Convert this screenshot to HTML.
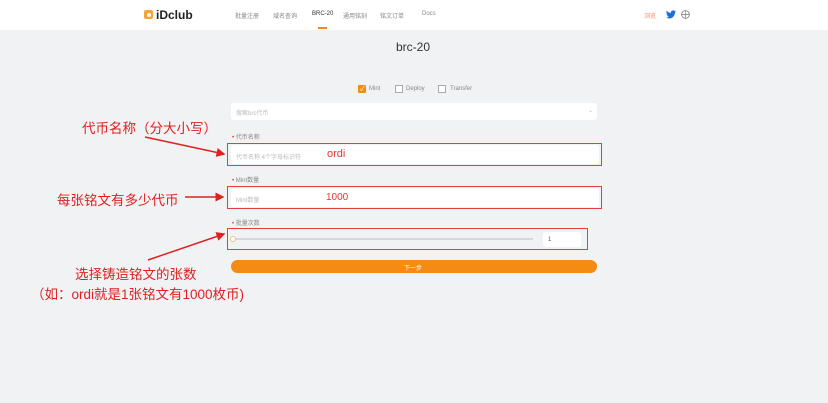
<!DOCTYPE html>
<html style="background:#f1f2f4"><head><meta charset="utf-8"><style>
*{margin:0;padding:0;box-sizing:border-box}
html,body{width:828px;height:403px;background:#f1f2f4}
body{font-family:"Liberation Sans","Noto Sans CJK SC",sans-serif;position:relative;overflow:hidden}
.bg{position:fixed;left:0;top:0;width:100%;height:100%;min-height:420px;background:#f1f2f4}
.hd{position:absolute;left:0;top:0;width:828px;height:30px;background:#fff}
.a{position:absolute;white-space:nowrap}
.nav{font-size:6px;color:#888;top:11px}
.in{position:absolute;background:#fff;border-radius:3px}
.lbl{font-size:6px;color:#888}
.box{position:absolute;border:1.5px solid #e53c3c}
.ann{font-size:13.5px;color:#e02020}
</style></head><body>
<div class="bg"></div>
<div class="hd"></div>
<div class="a" style="left:144px;top:10px;width:9px;height:9px;background:#f7a23a;border-radius:2px"></div>
<div class="a" style="left:147px;top:13px;width:4px;height:4px;background:#fff;border-radius:50%"></div>
<div class="a" style="left:156px;top:8px;font-size:12px;font-weight:bold;color:#222">iDclub</div>
<div class="a nav" style="left:235px">批量注册</div>
<div class="a nav" style="left:273px">域名查询</div>
<div class="a nav" style="left:312px;color:#333">BRC-20</div>
<div class="a" style="left:318px;top:27px;width:9px;height:2px;background:#f28a1c"></div>
<div class="a nav" style="left:343px">通用铭刻</div>
<div class="a nav" style="left:380px">铭文订单</div>
<div class="a nav" style="left:422px">Docs</div>
<div class="a nav" style="left:644px;color:#f28a5c">浏览</div>
<svg class="a" style="left:666px;top:10px" width="10" height="9" viewBox="0 0 24 20"><path d="M24 2.4a10 10 0 0 1-2.8.8A5 5 0 0 0 23.3.5a10 10 0 0 1-3.1 1.2A4.9 4.9 0 0 0 11.8 6 14 14 0 0 1 1.7.9a4.9 4.9 0 0 0 1.5 6.6A4.9 4.9 0 0 1 1 6.9a4.9 4.9 0 0 0 3.9 4.8 5 5 0 0 1-2.2.1 4.9 4.9 0 0 0 4.6 3.4A9.9 9.9 0 0 1 0 17.3 14 14 0 0 0 7.5 19.5c9 0 14-7.5 14-14v-.6A10 10 0 0 0 24 2.4z" fill="#1d6fd6"/></svg>
<svg class="a" style="left:681px;top:10px" width="9" height="9" viewBox="0 0 10 10"><circle cx="5" cy="5" r="4.3" fill="none" stroke="#777" stroke-width=".9"/><path d="M1 5h8M5 .7v8.6" stroke="#777" stroke-width=".7"/></svg>

<div class="a" style="left:396px;top:40px;font-size:12px;color:#333">brc-20</div>

<div class="a" style="left:358px;top:85px;width:8px;height:8px;background:#f28a1c;border-radius:1px"></div>
<div class="a" style="left:360px;top:84px;font-size:7px;color:#fff">✓</div>
<div class="a lbl" style="left:369px;top:86px">Mint</div>
<div class="a" style="left:395px;top:85px;width:8px;height:8px;border:1px solid #aaa;background:#fff"></div>
<div class="a lbl" style="left:406px;top:86px">Deploy</div>
<div class="a" style="left:438px;top:85px;width:8px;height:8px;border:1px solid #aaa;background:#fff"></div>
<div class="a lbl" style="left:450px;top:86px">Transfer</div>

<div class="in" style="left:231px;top:103px;width:366px;height:17px"></div>
<div class="a lbl" style="left:236px;top:108px;color:#bbb">搜索brc代币</div>
<div class="a lbl" style="left:588px;top:107px;color:#bbb">⌄</div>

<div class="a lbl" style="left:232px;top:132px"><span style="color:#e33">•</span> 代币名称</div>
<div class="in" style="left:231px;top:145px;width:368px;height:19px"></div>
<div class="a lbl" style="left:236px;top:152px;color:#bbb">代币名称 4个字母标识符</div>
<div class="a" style="left:327px;top:148px;font-size:11px;color:#e33">ordi</div>
<div class="box" style="left:227px;top:143px;width:375px;height:23px"></div>

<div class="a lbl" style="left:232px;top:175px"><span style="color:#e33">•</span> Mint数量</div>
<div class="in" style="left:231px;top:188px;width:368px;height:19px"></div>
<div class="a lbl" style="left:236px;top:195px;color:#bbb">Mint数量</div>
<div class="a" style="left:326px;top:192px;font-size:10px;color:#e33">1000</div>
<div class="box" style="left:227px;top:186px;width:375px;height:23px"></div>

<div class="a lbl" style="left:232px;top:218px"><span style="color:#e33">•</span> 批量次数</div>
<div class="a" style="left:233px;top:238px;width:300px;height:2px;background:#d4d7e0"></div>
<div class="a" style="left:230px;top:236px;width:6px;height:6px;border:1px solid #f5c27a;background:#fff;border-radius:50%"></div>
<div class="in" style="left:543px;top:232px;width:38px;height:15px"></div>
<div class="a lbl" style="left:548px;top:237px;color:#555">1</div>
<div class="box" style="left:227px;top:228px;width:361px;height:22px"></div>

<div class="a" style="left:231px;top:260px;width:366px;height:13px;background:#f48c14;border-radius:7px"></div>
<div class="a" style="left:404px;top:263px;font-size:6px;color:#fff">下一步</div>

<div class="a ann" style="left:82px;top:117px">代币名称（分大小写）</div>
<div class="a ann" style="left:57px;top:189px">每张铭文有多少代币</div>
<div class="a ann" style="left:75px;top:263px">选择铸造铭文的张数</div>
<div class="a ann" style="left:31px;top:283px">（如：ordi就是1张铭文有1000枚币)</div>
<svg class="a" style="left:0;top:0" width="828" height="403">
<defs><marker id="m" markerWidth="6" markerHeight="6" refX="5" refY="3" orient="auto"><path d="M0 0L6 3L0 6z" fill="#e02020"/></marker></defs>
<g stroke="#e02020" stroke-width="1.5" marker-end="url(#m)">
<line x1="145" y1="137" x2="224" y2="154"/>
<line x1="185" y1="197" x2="223" y2="197"/>
<line x1="148" y1="260" x2="224" y2="234"/>
</g></svg>
</body></html>
